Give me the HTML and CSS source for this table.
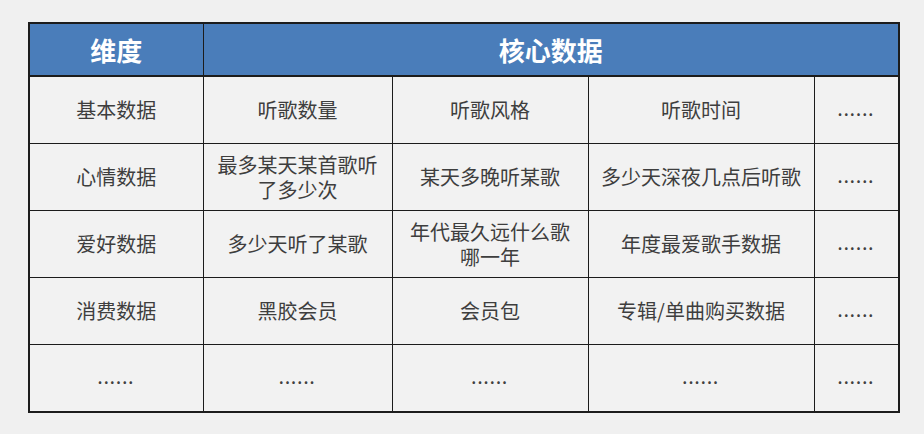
FILE: index.html
```html
<!DOCTYPE html>
<html lang="zh">
<head>
<meta charset="utf-8">
<link rel="stylesheet" href="styles.css">
</head>
<body>
<table class="grid">
  <colgroup>
    <col class="c1"><col class="c2"><col class="c3"><col class="c4"><col class="c5">
  </colgroup>
  <thead>
    <tr class="head">
      <th>维度</th>
      <th colspan="4">核心数据</th>
    </tr>
  </thead>
  <tbody>
    <tr>
      <td>基本数据</td><td>听歌数量</td><td>听歌风格</td><td>听歌时间</td><td class="dots">......</td>
    </tr>
    <tr>
      <td>心情数据</td><td><span class="ln">最多某天某首歌听</span><span class="ln">了多少次</span></td><td>某天多晚听某歌</td><td>多少天深夜几点后听歌</td><td class="dots">......</td>
    </tr>
    <tr>
      <td>爱好数据</td><td>多少天听了某歌</td><td><span class="ln">年代最久远什么歌</span><span class="ln">哪一年</span></td><td>年度最爱歌手数据</td><td class="dots">......</td>
    </tr>
    <tr>
      <td>消费数据</td><td>黑胶会员</td><td>会员包</td><td>专辑/单曲购买数据</td><td class="dots">......</td>
    </tr>
    <tr>
      <td class="dots">......</td><td class="dots">......</td><td class="dots">......</td><td class="dots">......</td><td class="dots">......</td>
    </tr>
  </tbody>
</table>
</body>
</html>
```
FILE: styles.css
```css
html, body {
  margin: 0;
  background: #f0f0f0;
}
body {
  padding: 22px 0 0 28px;
  font-family: "Noto Sans CJK SC", "Noto Sans", sans-serif;
}
.grid {
  border-collapse: collapse;
  table-layout: fixed;
  width: 870px;
  border: 2px solid #1c1c1c;
}
.c1 { width: 174px; }
.c2 { width: 189px; }
.c3 { width: 196px; }
.c4 { width: 226px; }
.c5 { width: 85px; }
.head th {
  height: 51px;
  background: #4a7dba;
  color: #ffffff;
  font-size: 26px;
  font-weight: 700;
  padding: 0;
  border: 1.5px solid #1c1c1c;
  border-bottom: 2px solid #1c1c1c;
  line-height: 1;
}
td {
  height: 66px;
  padding: 0;
  text-align: center;
  vertical-align: middle;
  background: #f2f2f2;
  color: #3e3e3e;
  font-size: 20px;
  line-height: 26px;
  border: 1.5px solid #1c1c1c;
}
.ln {
  display: block;
  height: 25px;
  line-height: 25px;
  overflow: visible;
}
td.dots {
  font-size: 14px;
  letter-spacing: 1.6px;
  color: #404040;
  font-weight: 700;
}
```
